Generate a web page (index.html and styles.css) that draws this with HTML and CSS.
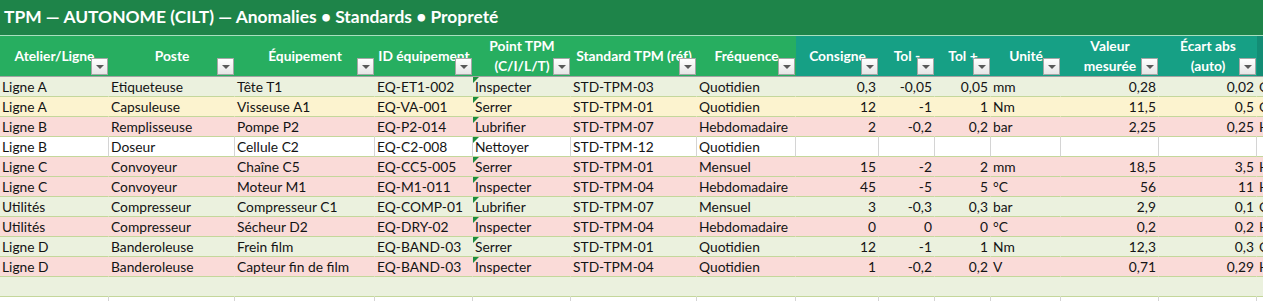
FILE: index.html
```html
<!DOCTYPE html>
<html lang="fr">
<head>
<meta charset="utf-8">
<title>TPM — AUTONOME (CILT)</title>
<link rel="stylesheet" href="styles.css">
</head>
<body>
<div class="sheet">
  <div class="title">TPM — AUTONOME (CILT) — Anomalies • Standards • Propreté</div>
  <table class="grid">
    <colgroup>
      <col class="w109"><col class="w126"><col class="w140"><col class="w98"><col class="w98"><col class="w126"><col class="w99"><col class="w83"><col class="w56"><col class="w56"><col class="w70"><col class="w98"><col class="w98"><col class="w98">
    </colgroup>
    <thead>
      <tr>
        <th class="hg">Atelier/Ligne<span class="dd"></span></th>
        <th class="hg">Poste<span class="dd"></span></th>
        <th class="hg">Équipement<span class="dd"></span></th>
        <th class="hg">ID équipement<span class="dd"></span></th>
        <th class="hg">Point TPM<br>(C/I/L/T)<span class="dd"></span></th>
        <th class="hg">Standard TPM (réf)<span class="dd"></span></th>
        <th class="hg">Fréquence<span class="dd"></span></th>
        <th class="ht">Consigne<span class="dd"></span></th>
        <th class="ht">Tol -<span class="dd"></span></th>
        <th class="ht">Tol +<span class="dd"></span></th>
        <th class="ht">Unité<span class="dd"></span></th>
        <th class="ht">Valeur<br>mesurée<span class="dd"></span></th>
        <th class="ht">Écart abs<br>(auto)<span class="dd"></span></th>
        <th class="hd">Statut<span class="dd"></span></th>
      </tr>
    </thead>
    <tbody>
      <tr class="r-green">
        <td>Ligne A</td><td>Etiqueteuse</td><td>Tête T1</td><td>EQ-ET1-002</td><td class="tri">Inspecter</td><td>STD-TPM-03</td><td>Quotidien</td><td class="n">0,3</td><td class="n">-0,05</td><td class="n">0,05</td><td>mm</td><td class="n">0,28</td><td class="n">0,02</td><td>OK</td>
      </tr>
      <tr class="r-yellow">
        <td>Ligne A</td><td>Capsuleuse</td><td>Visseuse A1</td><td>EQ-VA-001</td><td class="tri">Serrer</td><td>STD-TPM-01</td><td>Quotidien</td><td class="n">12</td><td class="n">-1</td><td class="n">1</td><td>Nm</td><td class="n">11,5</td><td class="n">0,5</td><td>OK</td>
      </tr>
      <tr class="r-pink">
        <td>Ligne B</td><td>Remplisseuse</td><td>Pompe P2</td><td>EQ-P2-014</td><td class="tri">Lubrifier</td><td>STD-TPM-07</td><td>Hebdomadaire</td><td class="n">2</td><td class="n">-0,2</td><td class="n">0,2</td><td>bar</td><td class="n">2,25</td><td class="n">0,25</td><td>HORS</td>
      </tr>
      <tr class="r-white">
        <td>Ligne B</td><td>Doseur</td><td>Cellule C2</td><td>EQ-C2-008</td><td class="tri">Nettoyer</td><td>STD-TPM-12</td><td>Quotidien</td><td class="n"></td><td class="n"></td><td class="n"></td><td></td><td class="n"></td><td class="n"></td><td></td>
      </tr>
      <tr class="r-pink">
        <td>Ligne C</td><td>Convoyeur</td><td>Chaîne C5</td><td>EQ-CC5-005</td><td class="tri">Serrer</td><td>STD-TPM-01</td><td>Mensuel</td><td class="n">15</td><td class="n">-2</td><td class="n">2</td><td>mm</td><td class="n">18,5</td><td class="n">3,5</td><td>HORS</td>
      </tr>
      <tr class="r-pink">
        <td>Ligne C</td><td>Convoyeur</td><td>Moteur M1</td><td>EQ-M1-011</td><td class="tri">Inspecter</td><td>STD-TPM-04</td><td>Hebdomadaire</td><td class="n">45</td><td class="n">-5</td><td class="n">5</td><td>°C</td><td class="n">56</td><td class="n">11</td><td>HORS</td>
      </tr>
      <tr class="r-green">
        <td>Utilités</td><td>Compresseur</td><td>Compresseur C1</td><td>EQ-COMP-01</td><td class="tri">Lubrifier</td><td>STD-TPM-07</td><td>Mensuel</td><td class="n">3</td><td class="n">-0,3</td><td class="n">0,3</td><td>bar</td><td class="n">2,9</td><td class="n">0,1</td><td>OK</td>
      </tr>
      <tr class="r-pink">
        <td>Utilités</td><td>Compresseur</td><td>Sécheur D2</td><td>EQ-DRY-02</td><td class="tri">Inspecter</td><td>STD-TPM-04</td><td>Hebdomadaire</td><td class="n">0</td><td class="n">0</td><td class="n">0</td><td>°C</td><td class="n">0,2</td><td class="n">0,2</td><td>HORS</td>
      </tr>
      <tr class="r-green">
        <td>Ligne D</td><td>Banderoleuse</td><td>Frein film</td><td>EQ-BAND-03</td><td class="tri">Serrer</td><td>STD-TPM-01</td><td>Quotidien</td><td class="n">12</td><td class="n">-1</td><td class="n">1</td><td>Nm</td><td class="n">12,3</td><td class="n">0,3</td><td>OK</td>
      </tr>
      <tr class="r-pink">
        <td>Ligne D</td><td>Banderoleuse</td><td>Capteur fin de film</td><td>EQ-BAND-03</td><td class="tri">Inspecter</td><td>STD-TPM-04</td><td>Quotidien</td><td class="n">1</td><td class="n">-0,2</td><td class="n">0,2</td><td>V</td><td class="n">0,71</td><td class="n">0,29</td><td>HORS</td>
      </tr>
      <tr class="r-green">
        <td></td><td></td><td></td><td></td><td></td><td></td><td></td><td></td><td></td><td></td><td></td><td></td><td></td><td></td>
      </tr>
      <tr class="r-white">
        <td></td><td></td><td></td><td></td><td></td><td></td><td></td><td></td><td></td><td></td><td></td><td></td><td></td><td></td>
      </tr>
    </tbody>
  </table>
</div>
</body>
</html>
```

FILE: styles.css
```css
html, body {
  margin: 0;
  padding: 0;
  overflow: hidden;
  background: #ffffff;
}

.sheet {
  width: 1360px;
  font-family: "Lato", "Liberation Sans", sans-serif;
  color: #141414;
}

.title {
  height: 35px;
  line-height: 34px;
  background: #1e8449;
  border-bottom: 1px solid #a9dfbf;
  color: #ffffff;
  font-weight: 700;
  font-size: 17.4px;
  padding-left: 4px;
  box-sizing: border-box;
  height: 36px;
}

.grid {
  border-collapse: separate;
  border-spacing: 0;
  table-layout: fixed;
  width: 1354px;
}

.w109 { width: 109px; }
.w126 { width: 126px; }
.w140 { width: 140px; }
.w98 { width: 98px; }
.w99 { width: 99px; }
.w83 { width: 83px; }
.w56 { width: 56px; }
.w70 { width: 70px; }

th {
  position: relative;
  height: 39px;
  padding: 0;
  border-bottom: 1px solid #a3a3a3;
  color: #ffffff;
  font-weight: 700;
  font-size: 13.8px;
  line-height: 20px;
  text-align: center;
  vertical-align: middle;
  white-space: nowrap;
  overflow: visible;
}

.hg { background: #27ae60; }
.ht { background: #16a085; }
.hd { background: #138d75; }

.dd {
  position: absolute;
  right: 1px;
  bottom: 1px;
  width: 17px;
  height: 17px;
  box-sizing: border-box;
  border: 1px solid #a6a6a6;
  background: linear-gradient(#ffffff, #e6e6e6);
}

.dd::after {
  content: "";
  position: absolute;
  left: 4px;
  top: 6px;
  border-left: 4px solid transparent;
  border-right: 4px solid transparent;
  border-top: 4px solid #595959;
}

td {
  position: relative;
  height: 19px;
  padding: 0 2px;
  border-bottom: 1px solid #c4d79b;
  border-right: 1px solid transparent;
  font-size: 13.8px;
  line-height: 19px;
  white-space: nowrap;
  overflow: hidden;
  text-align: left;
  vertical-align: middle;
}

td.n { text-align: right; }

.tri { overflow: visible; }

.tri::before {
  content: "";
  position: absolute;
  left: 0;
  top: 0;
  border-top: 6px solid #1e8e3e;
  border-right: 6px solid transparent;
}

.r-green td { background: #ebf1de; }
.r-yellow td { background: #fcf3cf; }
.r-pink td { background: #fadbd8; }
.r-white td { background: #ffffff; border-right-color: #d4d4d4; }
```
